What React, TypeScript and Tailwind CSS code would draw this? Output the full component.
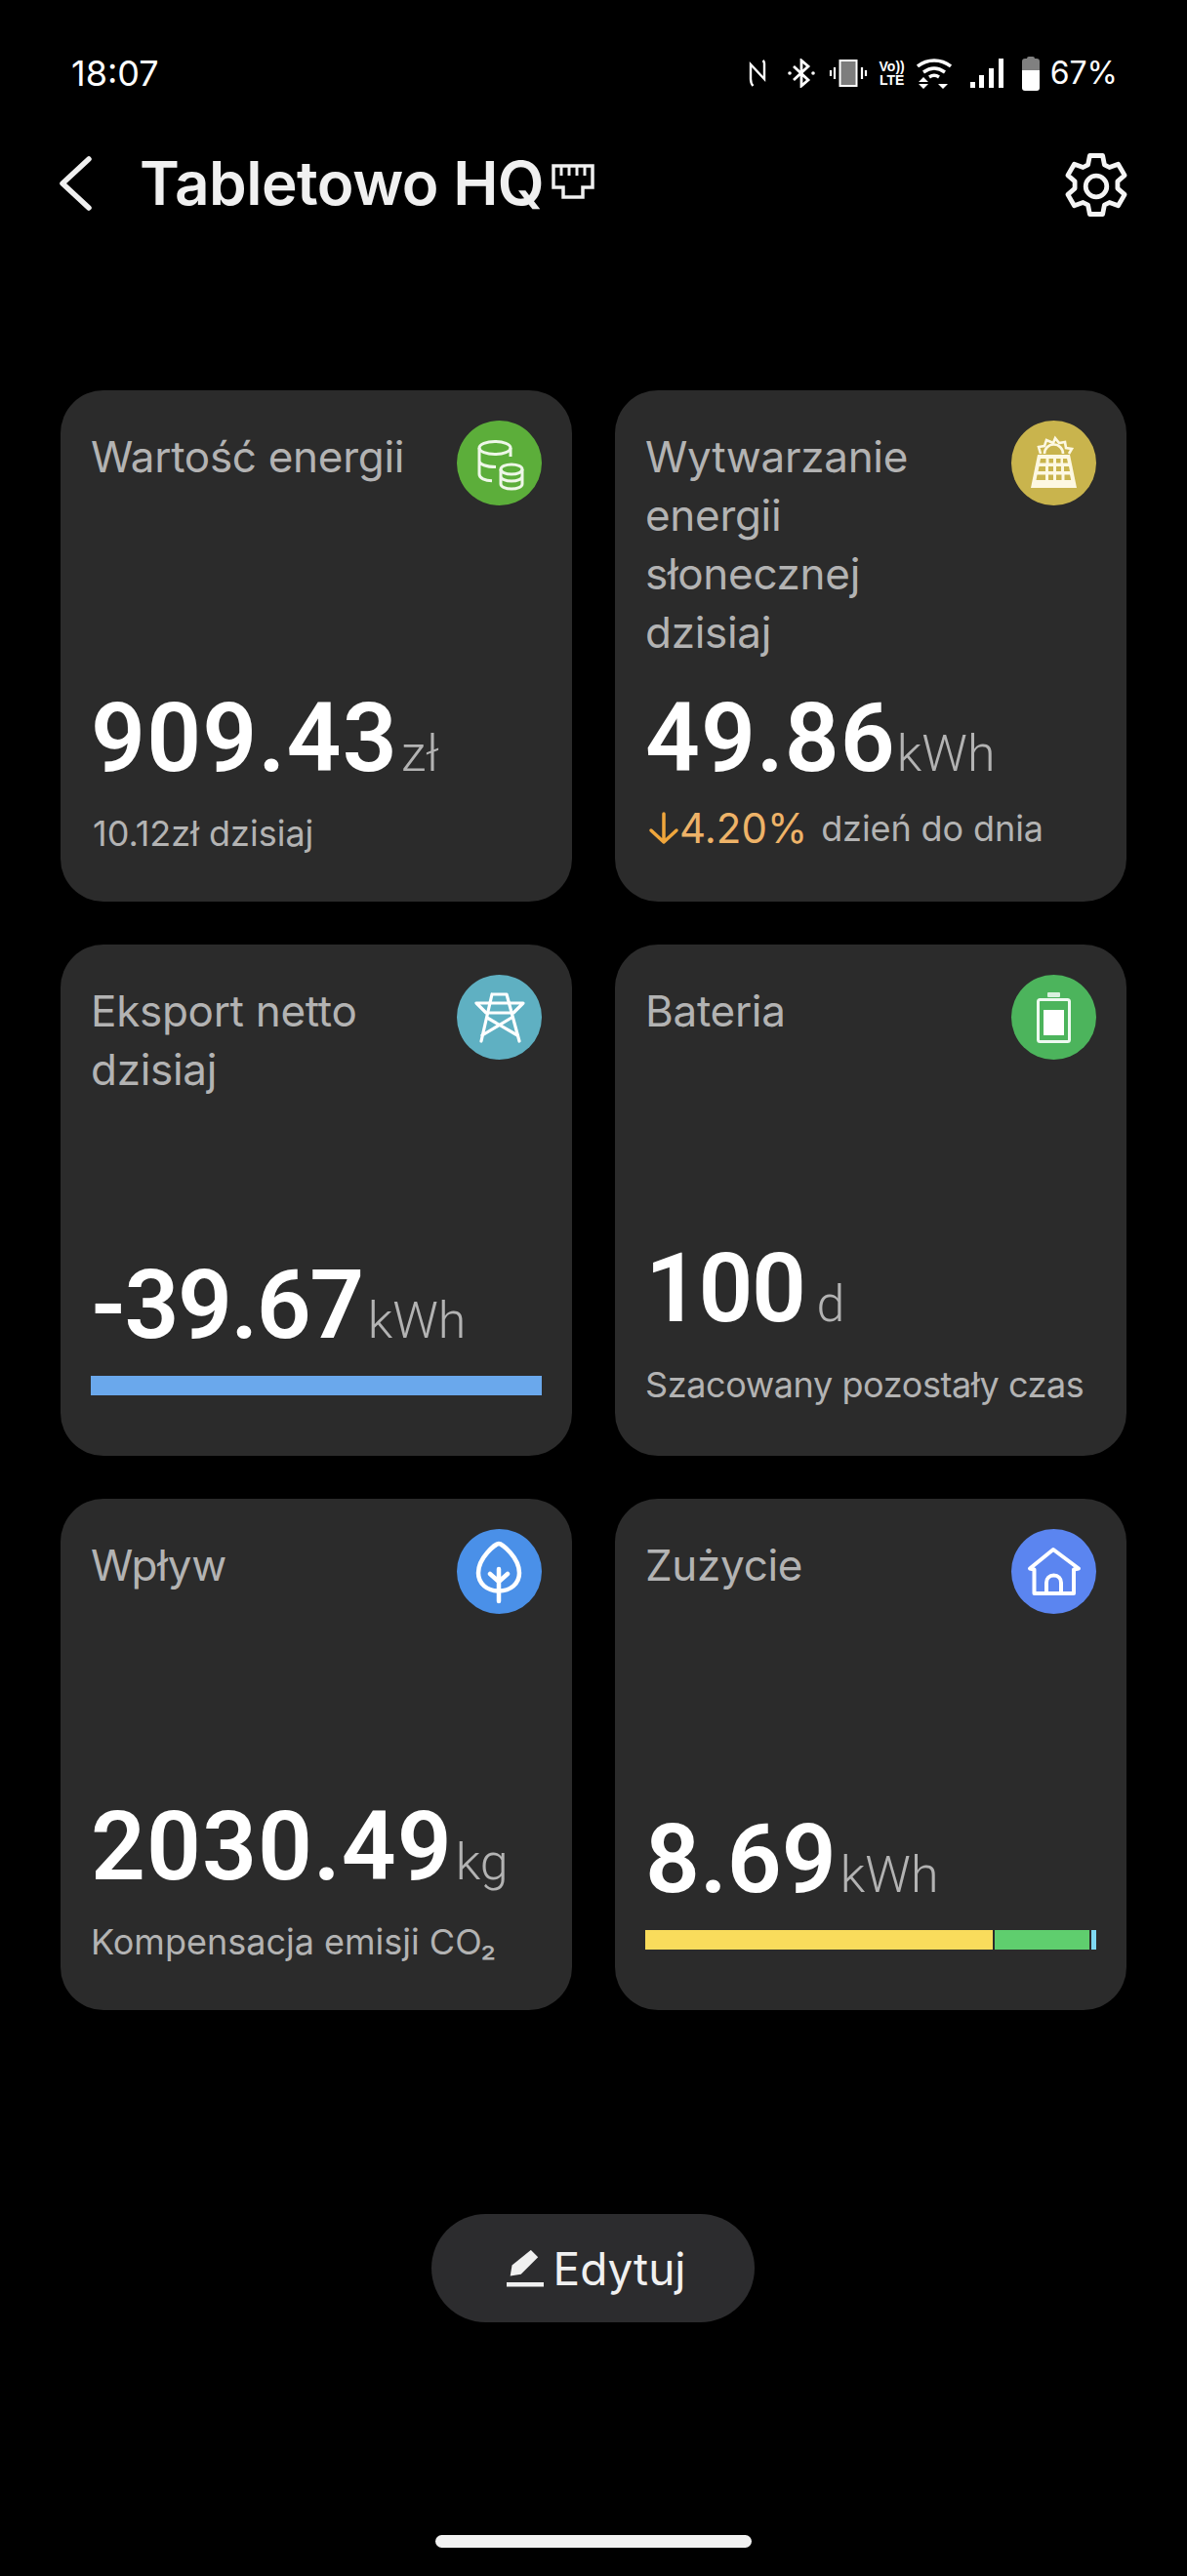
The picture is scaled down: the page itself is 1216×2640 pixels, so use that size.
import type { ReactNode } from 'react'

const sans = 'font-["Inter","Noto_Sans",sans-serif]'

function DbIcon() {
    return (
        <svg viewBox="0 0 87 87" className="w-full h-full" fill="none" stroke="#eef7e8" strokeWidth="3">
            <ellipse cx="39" cy="28" rx="16" ry="6.5" />
            <path d="M23 28v27c0 4 6 6.5 13 6.8M55 28v9M23 41c0 4 7 6.5 17 6.5M23 41v14" />
            <ellipse cx="56" cy="50" rx="11" ry="5" fill="#5cae3a" />
            <path d="M45 50v15c0 3 5 5 11 5s11-2 11-5V50M45 57c0 3 5 5 11 5s11-2 11-5" />
        </svg>
    )
}

function SolarIcon() {
    return (
        <svg viewBox="0 0 87 87" className="w-full h-full" fill="none" stroke="#fdf8e2" strokeWidth="2.6">
            <path d="M30 34l-2-7 6-1 2-6 7 3 2-5 4 5 6-1 1 6 6 1-3 5" />
            <path d="M34 34a9.500 9.500 0 0 1 19 0" />
            <path d="M27 35h33l7 34H20z" fill="#fdf8e2" stroke="none" />
            <g fill="#c9b44d" stroke="none">
                <path d="M30 39h5.500v4.500H29.200zM38.500 39h4.500v4.500h-4.500zM46 39h4.500v4.500H46zM53 39h4l1 4.500h-5z" />
                <path d="M28.500 47h6.500v5h-7.500zM38 47h5v5h-5zM46 47h5v5h-5zM54 47h5l1 5h-6z" />
                <path d="M26.500 55.500h8.500v5.500h-9.500zM38 55.500h5v5.500h-5zM46 55.500h5.500v5.500H46zM54.500 55.500h5.500l1.200 5.500h-6.700z" />
            </g>
        </svg>
    )
}

function PylonIcon() {
    return (
        <svg viewBox="0 0 87 87" className="w-full h-full" fill="none" stroke="#ffffff" strokeWidth="3.200" strokeLinejoin="round" strokeLinecap="round">
            <path d="M36 20h15l13 48M36 20L25 68" />
            <path d="M20 29h48L58 39H30z" />
            <path d="M31 44l31 18M56 44L26 62" />
        </svg>
    )
}

function BatteryIcon() {
    return (
        <svg viewBox="0 0 87 87" className="w-full h-full">
            <rect x="37" y="18" width="13" height="5" rx="1" fill="#d9f1de" />
            <rect x="27.500" y="25.500" width="32" height="43" rx="2" fill="none" stroke="#eef9f0" strokeWidth="3" />
            <rect x="33" y="36" width="21" height="26" fill="#ffffff" />
        </svg>
    )
}

function LeafIcon() {
    return (
        <svg viewBox="0 0 87 87" className="w-full h-full" fill="none" stroke="#ffffff" strokeWidth="4.500" strokeLinecap="round" strokeLinejoin="round">
            <path d="M43 15c-3 0-21 14-21 30 0 11 9 18.500 21 18.500S64 56 64 45C64 29 46 15 43 15z" />
            <path d="M43 41v33M34 46l9 8 9-8" />
        </svg>
    )
}

function HomeIcon() {
    return (
        <svg viewBox="0 0 87 87" className="w-full h-full" fill="none" stroke="#ffffff" strokeWidth="4" strokeLinejoin="round">
            <path d="M43 21L19 40.500l4.500 1V66h40.500V41.500l5-1z" />
            <path d="M36 66V55c0-4.500 3-7.500 7.500-7.500S51 50.500 51 55v11" />
        </svg>
    )
}

type CardProps = {
    title: string
    titleClass?: string
    icon: ReactNode
    iconBg: string
    value: string
    valueClass: string
    unit: string
    unitClass?: string
    pb: string
    children?: ReactNode
}

function Card({ title, titleClass, icon, iconBg, value, valueClass, unit, unitClass, pb, children }: CardProps) {
    return (
        <div className={`h-[524px] rounded-[44px] bg-[#2b2b2b] pl-[31px] pr-[31px] pt-[31px] flex flex-col justify-between ${pb}`}>
            <div className="flex justify-between items-start">
                <div className={`pt-[7px] text-[44px] leading-[60px] text-[#b3b3b3] tracking-[-0.3px] ${titleClass ?? ''}`}>{title}</div>
                <div className={`w-[87px] h-[87px] rounded-full shrink-0 ${iconBg}`}>{icon}</div>
            </div>
            <div>
                <div className="flex items-baseline font-['Roboto',sans-serif]">
                    <span className={`text-[98px] leading-[100px] font-semibold text-white ${valueClass}`}>{value}</span>
                    <span className={`text-[52px] leading-[60px] font-light text-[#b3b3b3] ${unitClass ?? 'ml-[3px]'}`}>{unit}</span>
                </div>
                {children}
            </div>
        </div>
    )
}

function StatusIcons() {
    return (
        <div className="flex items-center">
            {/* nfc */}
            <svg viewBox="0 0 18 28" className="w-[18px] h-[28px]" fill="none" stroke="#fff" strokeWidth="2.400">
                <path d="M2 20V5l14 15V4M2 20c0 3 .5 5 2.500 7M16 4c0-1-.4-2-1.500-3" />
            </svg>
            {/* bluetooth */}
            <svg viewBox="0 0 30 30" className="w-[30px] h-[30px] ml-[21px]" fill="none" stroke="#fff" strokeWidth="2.800">
                <path d="M7 8l15 14-7 6V2l7 6L7 22" />
                <circle cx="3" cy="15" r="1.800" fill="#fff" stroke="none" />
                <circle cx="27" cy="15" r="1.800" fill="#fff" stroke="none" />
            </svg>
            {/* vibrate */}
            <svg viewBox="0 0 40 30" className="w-[40px] h-[30px] ml-[13px]">
                <rect x="11.500" y="2" width="17" height="26" fill="#7d7d7d" stroke="#fff" strokeWidth="2" />
                <path d="M6 9v12M2 12v6M34 9v12M38 12v6" stroke="#fff" strokeWidth="2.200" />
            </svg>
            {/* volte */}
            <div className="ml-[10px] w-[30px] flex flex-col items-center font-['Liberation_Sans',sans-serif] font-bold text-white text-[14px] leading-[14px]">
                <span>Vo))</span>
                <span>LTE</span>
            </div>
            {/* wifi */}
            <svg viewBox="0 0 36 32" className="w-[36px] h-[32px] ml-[10px]" fill="none" stroke="#fff" strokeWidth="3.400">
                <path d="M1 9c10-8 24-8 34 0M7 15c7-5 15-5 22 0M13 20c3-2 7-2 10 0" />
                <path d="M2 25l5-5 5 5zM2 27h10l-5 5zM22 27h10l-5 5z" fill="#fff" stroke="none" />
            </svg>
            {/* signal */}
            <svg viewBox="0 0 34 30" className="w-[34px] h-[30px] ml-[19px]" fill="#fff">
                <rect x="0" y="24" width="5" height="6" />
                <rect x="9" y="17" width="5" height="13" />
                <rect x="19" y="10" width="5" height="20" />
                <rect x="29" y="0" width="5" height="30" />
            </svg>
            {/* battery */}
            <svg viewBox="0 0 18 36" className="w-[18px] h-[36px] ml-[19px]">
                <path d="M5 3q0-2 2-2h4q2 0 2 2h2q3 0 3 3v9H0V6q0-3 3-3z" fill="#808080" />
                <path d="M0 15h18v18q0 3-3 3H3q-3 0-3-3z" fill="#fff" />
            </svg>
            <span className="ml-[11px] text-[32px] leading-[40px] text-white">67%</span>
        </div>
    )
}

export default function App() {
    return (
        <div className={`w-[1216px] h-[2640px] bg-black flex flex-col overflow-hidden ${sans}`}>
            <div className="flex justify-between items-center pl-[73px] pr-[71px] pt-[54px] h-[96px]">
                <span className="text-[36px] leading-[40px] text-white">18:07</span>
                <StatusIcons />
            </div>

            <div className="flex items-center justify-between pl-[60px] pr-[57px] mt-[52px] h-[80px]">
                <div className="flex items-center">
                    <svg viewBox="0 0 34 56" className="w-[34px] h-[56px]" fill="none" stroke="#f0f0f0" strokeWidth="5.500" strokeLinecap="round" strokeLinejoin="round">
                        <path d="M31 3L4 28l27 25" />
                    </svg>
                    <span className="ml-[49px] text-[62px] leading-[80px] font-semibold text-[#f0f0f0] tracking-[-0.5px]">Tabletowo HQ</span>
                    <svg viewBox="0 0 44 36" className="w-[44px] h-[38px] ml-[8px] -mt-[5px]" fill="none" stroke="#f0f0f0" strokeWidth="3.500">
                        <path d="M2 2h40v22H32v10H12V24H2z" />
                        <path d="M10 3v9M18 3v9M26 3v9M34 3v9" strokeWidth="3" />
                    </svg>
                </div>
                <svg viewBox="0 0 24 24" className="w-[72px] h-[72px] mt-[6px]" fill="none" stroke="#f5f5f5" strokeWidth="1.600" strokeLinejoin="round">
                    <path d="M9.800 1.500h4.400l.6 3.100 1.700.9 3-1.100 2.200 3.800-2.400 2.100v2.400l2.400 2.100-2.200 3.800-3-1.100-1.700.9-.6 3.100H9.800l-.6-3.100-1.700-.9-3 1.100-2.200-3.800 2.400-2.100v-2.400L2.300 8.200l2.200-3.800 3 1.100 1.700-.9z" />
                    <circle cx="12" cy="12" r="3.600" />
                </svg>
            </div>

            <div className="mt-[172px] px-[62px] grid grid-cols-2 gap-x-[44px] gap-y-[44px]">
                <Card title="Wartość energii" icon={<DbIcon />} iconBg="bg-[#5cae3a]" value="909.43" valueClass="tracking-[1.200px]" unit="zł" pb="pb-[48px]">
                    <div className="mt-[25px] text-[36px] leading-[44px] text-[#b3b3b3] pl-[2px]">10.12zł dzisiaj</div>
                </Card>
                <Card title="Wytwarzanie energii słonecznej dzisiaj" titleClass="w-[300px]" icon={<SolarIcon />} iconBg="bg-[#c9b44d]" value="49.86" valueClass="tracking-[1px]" unit="kWh" unitClass="ml-[1px]" pb="pb-[53px]">
                    <div className="mt-[20px] text-[36px] leading-[44px] text-[#b3b3b3] flex items-center">
                        <svg viewBox="0 0 32 34" className="w-[32px] h-[34px] ml-[3px]" fill="none" stroke="#f0a63c" strokeWidth="3.500" strokeLinecap="round" strokeLinejoin="round">
                            <path d="M16 2v29M3 19l13 12 13-12" />
                        </svg>
                        <span className="text-[#eeb368] text-[42px]">4.20%</span>
                        <span className="ml-[14px] tracking-[-0.1px]">dzień do dnia</span>
                    </div>
                </Card>
                <Card title="Eksport netto dzisiaj" titleClass="w-[320px]" icon={<PylonIcon />} iconBg="bg-[#5fb0c2]" value="-39.67" valueClass="tracking-[-1.500px]" unit="kWh" unitClass="ml-[5px]" pb="pb-[62px]">
                    <div className="mt-[22px] h-[20px] bg-[#6aa8ec]" />
                </Card>
                <Card title="Bateria" icon={<BatteryIcon />} iconBg="bg-[#4cb45c]" value="100" valueClass="tracking-[-1.500px]" unit="d" unitClass="ml-[12px]" pb="pb-[51px]">
                    <div className="mt-[26px] text-[36px] leading-[44px] text-[#b3b3b3] whitespace-nowrap tracking-[-0.4px]">Szacowany pozostały czas</div>
                </Card>
                <Card title="Wpływ" icon={<LeafIcon />} iconBg="bg-[#4a90e8]" value="2030.49" valueClass="tracking-[1px]" unit="kg" pb="pb-[48px]">
                    <div className="mt-[25px] text-[36px] leading-[44px] text-[#b3b3b3] whitespace-nowrap">Kompensacja emisji CO₂</div>
                </Card>
                <Card title="Zużycie" icon={<HomeIcon />} iconBg="bg-[#5b85f0]" value="8.69" valueClass="tracking-[0px]" unit="kWh" unitClass="ml-[4px]" pb="pb-[62px]">
                    <div className="mt-[22px] h-[20px] flex gap-[2px]">
                        <div className="w-[356px] bg-[#f9dc5c]" />
                        <div className="w-[97px] bg-[#5fce6e]" />
                        <div className="w-[5px] bg-[#7fd8f2]" />
                    </div>
                </Card>
            </div>

            <div className="mt-[209px] flex justify-center">
                <div className="w-[331px] h-[111px] mr-[1px] pl-[6px] rounded-full bg-[#2c2c2e] flex items-center justify-center gap-[10px]">
                    <svg viewBox="0 0 38 38" className="w-[38px] h-[38px]">
                        <path d="M27 1l8 8-19 19-12 2 2-12z" fill="#f0f0f0" transform="translate(0 -1) scale(.92)" />
                        <rect x="0" y="33" width="38" height="4.500" fill="#f0f0f0" />
                    </svg>
                    <span className="text-[46px] leading-[56px] text-[#f0f0f0]">Edytuj</span>
                </div>
            </div>

            <div className="mt-[218px] flex justify-center">
                <div className="w-[324px] h-[13px] rounded-full bg-[#f2f2f2]" />
            </div>
        </div>
    )
}
